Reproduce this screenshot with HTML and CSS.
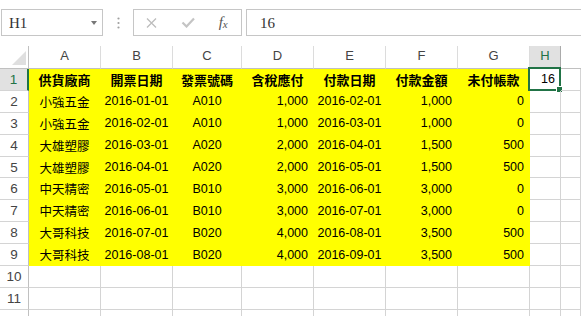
FILE: index.html
```html
<!DOCTYPE html>
<html lang="zh-Hant">

<head>
  <meta charset="UTF-8" />
  <meta name="viewport" content="width=device-width, initial-scale=1.0" />
  <title>付款明細</title>
  <link rel="stylesheet" href="styles.css">
</head>

<body>
  <div class="formula-bar">
    <div class="name-box">
      <span>H1</span>
      <span class="caret"></span>
    </div>
    <div class="grip">
      <svg width="3" height="12" viewBox="0 0 3 12">
        <circle cx="1.5" cy="1.5" r="1.1" fill="#a0a0a0" />
        <circle cx="1.5" cy="6" r="1.1" fill="#a0a0a0" />
        <circle cx="1.5" cy="10.5" r="1.1" fill="#a0a0a0" />
      </svg>
    </div>
    <div class="fx-box">
      <span class="fx-btn">
        <svg width="11" height="10" viewBox="0 0 11 10">
          <path d="M1 0.5 L10 9.5 M10 0.5 L1 9.5" stroke="#bdbdbd" stroke-width="1.3" fill="none" />
        </svg>
      </span>
      <span class="fx-btn">
        <svg width="14" height="11" viewBox="0 0 14 11">
          <path d="M1.5 5.5 L5.5 9.5 L13 1.5" stroke="#c4c4c4" stroke-width="2.2" fill="none" />
        </svg>
      </span>
      <span class="fx-btn fx"><i>f</i><i class="fx-x">x</i></span>
    </div>
    <div class="formula-input">16</div>
  </div>

  <div class="sheet" id="sheet"></div>

  <script>
    const colunas = ['A', 'B', 'C', 'D', 'E', 'F', 'G', 'H'];
    const alinhar = ['c', 'c', 'c', 'r', 'c', 'r', 'r', 'r'];

    const titulos = ['供貨廠商', '開票日期', '發票號碼', '含稅應付', '付款日期', '付款金額', '未付帳款'];

    const dados = [
      ['小強五金', '2016-01-01', 'A010', '1,000', '2016-02-01', '1,000', '0'],
      ['小強五金', '2016-02-01', 'A010', '1,000', '2016-03-01', '1,000', '0'],
      ['大雄塑膠', '2016-03-01', 'A020', '2,000', '2016-04-01', '1,500', '500'],
      ['大雄塑膠', '2016-04-01', 'A020', '2,000', '2016-05-01', '1,500', '500'],
      ['中天精密', '2016-05-01', 'B010', '3,000', '2016-06-01', '3,000', '0'],
      ['中天精密', '2016-06-01', 'B010', '3,000', '2016-07-01', '3,000', '0'],
      ['大哥科技', '2016-07-01', 'B020', '4,000', '2016-08-01', '3,500', '500'],
      ['大哥科技', '2016-08-01', 'B020', '4,000', '2016-09-01', '3,500', '500']
    ];

    // 11 linhas visíveis + uma faixa vazia no rodapé
    function renderSheet() {
      let html = '<div class="cell corner"></div>';
      html += colunas.map(c => `<div class="cell col-head${c === 'H' ? ' on' : ''}">${c}</div>`).join('');
      html += '<div class="cell col-head rest"></div>';

      for (let r = 1; r <= 12; r++) {
        html += `<div class="cell row-head${r === 1 ? ' on' : ''}">${r <= 11 ? r : ''}</div>`;
        colunas.forEach((c, i) => {
          let valor = '';
          let classes = 'cell';
          if (r === 1 && i < 7) {
            valor = titulos[i];
            classes += ' title';
          } else if (r >= 2 && r <= 9 && i < 7) {
            valor = dados[r - 2][i];
            classes += ' ' + alinhar[i];
          }
          if (r <= 9 && i < 7) classes += ' fill';
          if (r === 1 && c === 'H') {
            html += `<div class="cell r active">16<span class="sel"><span class="handle"></span></span></div>`;
            return;
          }
          html += `<div class="${classes}">${valor}</div>`;
        });
        html += '<div class="cell"></div>';
      }

      document.getElementById('sheet').innerHTML = html;
    }

    renderSheet();
  </script>
</body>

</html>
```

FILE: styles.css
```css
:root {
  --grid: #d4d4d4;
  --head-line: #c0c0c0;
  --head-text: #444;
  --head-on: #e1e1e1;
  --green: #217346;
  --fill: #ffff00;
  --box-line: #c6c6c6;
}

* {
  box-sizing: border-box;
}

body {
  margin: 0;
  height: 316px;
  overflow: hidden;
  background: #fff;
  font-family: 'Liberation Sans', 'Noto Sans CJK TC', sans-serif;
}

/* formula bar */

.formula-bar {
  display: flex;
  height: 27px;
  margin: 9px 0 10px 1px;
}

.name-box {
  width: 102px;
  display: flex;
  align-items: center;
  padding: 1px 5px 0 7px;
  border: 1px solid var(--box-line);
  font-family: 'Liberation Serif', serif;
  font-size: 15px;
  color: #333;
}

.caret {
  margin-left: auto;
  border-left: 3.5px solid transparent;
  border-right: 3.5px solid transparent;
  border-top: 4px solid #777;
}

.grip {
  width: 30px;
  display: flex;
  align-items: center;
  justify-content: center;
}

.fx-box {
  width: 109px;
  display: flex;
  border: 1px solid var(--box-line);
}

.fx-btn {
  flex: 1;
  display: flex;
  align-items: center;
  justify-content: center;
}

.fx {
  font-family: 'Liberation Serif', serif;
  font-size: 15px;
  color: #555;
}

.fx-x {
  font-size: 11px;
  margin-top: 3px;
}

.formula-input {
  flex: 1;
  display: flex;
  align-items: center;
  margin-left: 4px;
  margin-right: -2px;
  padding: 1px 0 0 13px;
  border: 1px solid var(--box-line);
  font-family: 'Liberation Serif', serif;
  font-size: 15px;
  color: #333;
}

/* grid */

.sheet {
  display: grid;
  grid-template-columns: 29px 72px 72px 69px 72px 72px 72px 72px 31px 1fr;
  grid-template-rows: 23px;
  grid-auto-rows: 21.9px;
}

.cell {
  position: relative;
  display: flex;
  align-items: center;
  justify-content: center;
  border-right: 1px solid var(--grid);
  border-bottom: 1px solid var(--grid);
  font-size: 12.5px;
  color: #000;
  white-space: nowrap;
}

.cell.r {
  justify-content: flex-end;
  padding-right: 5px;
}

.cell.fill {
  background: var(--fill);
  border-color: var(--fill);
}

.cell.title {
  font-size: 13px;
  font-weight: bold;
}

.corner {
  border-right-color: var(--head-line);
  border-bottom-color: var(--head-line);
}

.corner::after {
  content: '';
  position: absolute;
  right: 2px;
  bottom: 3px;
  border-left: 14px solid transparent;
  border-bottom: 14px solid #dfdfdf;
}

.col-head {
  padding-bottom: 3px;
  font-size: 13px;
  color: var(--head-text);
  border-right-color: #dcdcdc;
  border-bottom-color: var(--head-line);
}

.col-head.rest {
  border-right: none;
}

.row-head {
  font-size: 13.5px;
  color: var(--head-text);
  border-right-color: var(--head-line);
}

.col-head.on,
.row-head.on {
  background: var(--head-on);
  color: var(--green);
}

.col-head.on {
  border-right-color: #ababab;
  border-bottom: 2px solid var(--green);
}

.row-head.on {
  border-right: 2px solid var(--green);
}

.active .sel {
  position: absolute;
  top: -2px;
  left: -2px;
  right: -1px;
  bottom: -1px;
  border: 2px solid var(--green);
}

.sel .handle {
  position: absolute;
  right: -4px;
  bottom: -4px;
  width: 7px;
  height: 7px;
  background: var(--green);
  border: 1px solid #fff;
}
```
